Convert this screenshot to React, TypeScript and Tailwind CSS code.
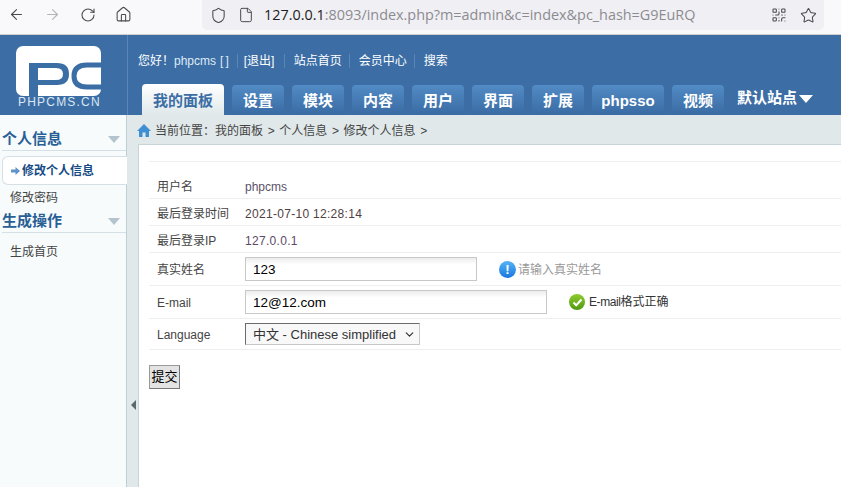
import { ArrowLeft, ArrowRight, ChevronDown, File, Home, QrCode, RotateCw, Shield, Star } from "lucide-react";

const FONT = "[font-family:'Liberation_Sans','Noto_Sans_CJK_SC',sans-serif]";

const tabs = [
  { name: "设置", w: "w-[52px]" },
  { name: "模块", w: "w-[52px]" },
  { name: "内容", w: "w-[52px]" },
  { name: "用户", w: "w-[52px]" },
  { name: "界面", w: "w-[52px]" },
  { name: "扩展", w: "w-[52px]" },
  { name: "phpsso", w: "w-[72px]" },
  { name: "视频", w: "w-[52px]" },
];

const topLinks = [
  { t: "[退出]", c: "ml-[6px] pl-[6px] w-[41px]" },
  { t: "站点首页", c: "ml-[6px] pl-[9px]" },
  { t: "会员中心", c: "ml-[7px] pl-[9px]" },
  { t: "搜索", c: "ml-[7px] pl-[9px]" },
];

const BrowserBar = () => (
  <div className="h-[35px] shrink-0 flex items-start bg-[#f9f9fb] border-b border-[#cfcfcf] text-[#4a4a4f]">
    <div className="flex items-center h-[29px] pl-[8px] gap-[19px]">
      <ArrowLeft size={17} strokeWidth={1.5} />
      <ArrowRight size={17} strokeWidth={1.5} className="text-[#b5b5b8]" />
      <RotateCw size={16} strokeWidth={1.6} />
      <Home size={17} strokeWidth={1.5} />
    </div>
    <div className="ml-[70px] w-[622px] h-[30px] flex items-center bg-[#f0f0f4] rounded-b-[5px] pl-[8px] pr-[7px]">
      <Shield size={17} strokeWidth={1.5} />
      <File size={16} strokeWidth={1.5} className="ml-[11px]" />
      <span className="ml-[10px] text-[14.4px] text-[#8c8b90] whitespace-nowrap [font-family:'Open_Sans',sans-serif]">
        <span className="text-[#1c1b22]">127.0.0.1</span>:8093/index.php?m=admin&amp;c=index&amp;pc_hash=G9EuRQ
      </span>
      <div className="ml-auto flex items-center gap-[13px]">
        <QrCode size={16} strokeWidth={1.6} />
        <Star size={17} strokeWidth={1.5} />
      </div>
    </div>
  </div>
);

const Logo = () => (
  <div className="w-[127px] shrink-0 pl-[16px] pt-[11px]">
    <svg width="86" height="52" viewBox="0 0 86 52" className="block">
      <rect x="0" y="0" width="85" height="50" rx="7" fill="#fff" />
      <path d="M13 52V17H41Q53 17 53 28Q53 39 41 39H22V34H40Q47 34 47 28Q47 22 40 22H22V52Z" fill="#3b6ea5" />
      <path d="M86 19H71Q58 19 58 30Q58 41 71 41H86" fill="none" stroke="#3b6ea5" strokeWidth="5" />
    </svg>
    <div className="text-[#dbe7f3] text-[12px] leading-[12px] mt-[-2px] pl-[2px] tracking-[1.2px] whitespace-nowrap [font-family:'Liberation_Sans',sans-serif]">PHPCMS.CN</div>
  </div>
);

const Header = () => (
  <div className="h-[80px] shrink-0 flex bg-[#3c6ea5]">
    <Logo />
    <div className="flex-1 border-l border-[#5a86b5] pl-[10px]">
      <div className="h-[49px] pt-[3px] flex items-center text-white text-[12px] whitespace-nowrap">
        <span>您好！<span className="text-[#dfeaf6]">phpcms<span className="ml-[4px] tracking-[2px]">[]</span></span></span>
        {topLinks.map((l) => (
          <span key={l.t} className={`${l.c} border-l border-[#5a86b5] leading-[14px]`}>{l.t}</span>
        ))}
      </div>
      <div className="flex items-end h-[31px] ml-[4px] gap-[8px] text-[15px] font-bold">
        <div className="w-[82px] h-[31px] pt-[4px] flex items-center justify-center rounded-t-[4px] text-[#3c6ea5] bg-gradient-to-b from-white to-[#e0e8ea]">我的面板</div>
        {tabs.map((t) => (
          <div key={t.name} className={`${t.w} h-[30px] pt-[3px] flex items-center justify-center rounded-t-[4px] text-white bg-gradient-to-b from-[#528bc5] to-[#3a6ba3]`}>{t.name}</div>
        ))}
        <div className="self-stretch ml-[5px] flex items-center pb-[2px] text-white whitespace-nowrap">
          默认站点
          <span className="ml-[2px] w-0 h-0 border-x-[7px] border-x-transparent border-t-[8px] border-t-white" />
        </div>
      </div>
    </div>
  </div>
);

const SideHeading = ({ title }: { title: string }) => (
  <div className="h-[25px] ml-[2px] pt-[2px] flex items-center justify-between border-b border-[#d5e0e6] pr-[6px] text-[15px] leading-[20px] font-bold text-[#2a5f96]">
    {title}
    <span className="w-0 h-0 border-x-[6px] border-x-transparent border-t-[7px] border-t-[#b4c3cc]" />
  </div>
);

const Sidebar = () => (
  <div className="w-[127px] shrink-0 relative bg-[#f7fbfc] border-r border-[#bfcdd4] pt-[11px]">
    <SideHeading title="个人信息" />
    <div className="h-[29px] mt-[5px] ml-[2px] mr-[-1px] flex items-center pl-[8px] bg-white border border-r-0 border-[#d5e0e6] rounded-l-[6px] text-[12px] font-bold text-[#164a84] whitespace-nowrap">
      <svg width="9" height="8" viewBox="0 0 9 8" className="shrink-0"><path d="M0 2.5H4.5V0L9 4L4.5 8V5.5H0Z" fill="#5f93c9" /></svg>
      <span className="ml-[2px]">修改个人信息</span>
    </div>
    <div className="h-[26px] pl-[10px] flex items-center text-[12px] text-[#444]">修改密码</div>
    <div className="mt-[-3px]">
      <SideHeading title="生成操作" />
    </div>
    <div className="h-[36px] pl-[10px] pt-[2px] flex items-center text-[12px] text-[#444]">生成首页</div>
  </div>
);

const rows = [
  { h: "h-[37px]", pt: "pt-[14px]", label: "用户名", value: <span className="text-[#5b5269]">phpcms</span> },
  { h: "h-[27px]", pt: "pt-[3px]", label: "最后登录时间", value: <span className="text-[#4f3f3f] tracking-[0.3px]">2021-07-10 12:28:14</span> },
  { h: "h-[27px]", pt: "pt-[3px]", label: "最后登录IP", value: <span className="text-[#5b4a66] tracking-[0.3px]">127.0.0.1</span> },
  {
    h: "h-[33px]",
    pt: "",
    label: "真实姓名",
    value: (
      <div className="flex items-center">
        <div className="w-[232px] h-[24px] flex items-center pl-[7px] pt-[2px] border border-[#c8c8c8] bg-gradient-to-b from-[#ececec] to-white to-30% text-[13.5px] text-black">123</div>
        <span className="ml-[22px] w-[17px] h-[17px] rounded-full bg-gradient-to-b from-[#55b4f5] to-[#1677dd] text-white text-[13px] leading-[17px] font-bold text-center">!</span>
        <span className="ml-[2px] text-[#999] pt-[2px]">请输入真实姓名</span>
      </div>
    ),
  },
  {
    h: "h-[33px]",
    pt: "",
    label: "E-mail",
    value: (
      <div className="flex items-center">
        <div className="w-[302px] h-[24px] flex items-center pl-[7px] pt-[2px] border border-[#c8c8c8] bg-gradient-to-b from-[#ececec] to-white to-30% text-[13.5px] text-black">12@12.com</div>
        <span className="ml-[22px] w-[16px] h-[16px] flex items-center justify-center rounded-full bg-gradient-to-b from-[#8fcb2e] to-[#4f9a10]">
          <svg width="11" height="9" viewBox="0 0 11 9"><path d="M1.5 4.5L4.2 7.2L9.5 1.5" fill="none" stroke="#fff" strokeWidth="2" /></svg>
        </span>
        <span className="ml-[4px] text-[#333]"><span className="tracking-[-0.4px]">E-mail</span>格式正确</span>
      </div>
    ),
  },
  {
    h: "h-[31px]",
    pt: "",
    label: "Language",
    value: (
      <div className="w-[175px] h-[22px] flex items-center justify-between pl-[7px] pr-[3px] border border-[#c8c8c8] border-t-[#6b6b6b] border-l-[#6b6b6b] bg-[#f8f8f8] text-[13px] text-[#333] whitespace-nowrap">
        <span className="pt-[2px]">中文 - Chinese simplified</span>
        <ChevronDown size={13} strokeWidth={2.2} />
      </div>
    ),
  },
];

const Content = () => (
  <div className="flex-1 min-w-0 flex flex-col bg-[#e0e8ea]">
    <div className="h-[29px] shrink-0 pl-[10px] pt-[2px] flex items-center text-[12px] text-[#444] whitespace-nowrap">
      <svg width="14" height="13" viewBox="0 0 14 13" className="shrink-0"><path d="M7 0L14 7H12V13H8.5V8.5H5.5V13H2V7H0Z" fill="#3f8fd2" /></svg>
      <span className="ml-[4px] [word-spacing:1.3px]">当前位置：我的面板 &gt; 个人信息 &gt; 修改个人信息 &gt;</span>
    </div>
    <div className="flex flex-1 min-h-0 relative">
      <div className="w-[11px] shrink-0 relative">
        <span className="absolute left-[4px] top-[256px] w-0 h-0 border-y-[5px] border-y-transparent border-r-[5px] border-r-[#5a6870]" />
      </div>
      <div className="flex-1 bg-white border-l border-t border-[#c8d4da] pl-[10px] pt-[16px]">
        <div className="border-t border-[#eeeeee] text-[12px]">
          {rows.map((r) => (
            <div key={r.label} className={`${r.h} flex items-center border-b border-[#eeeeee]`}>
              <div className={`${r.pt || "pt-[2px]"} w-[96px] pl-[8px] shrink-0 text-[#444]`}>{r.label}</div>
              <div className={r.pt}>{r.value}</div>
            </div>
          ))}
        </div>
        <button className="mt-[15px] w-[31px] h-[24px] flex items-center justify-center text-[13px] text-black bg-[#e3e3e3] border border-[#999] border-r-[#777] border-b-[#777]">提交</button>
      </div>
    </div>
  </div>
);

export default function App() {
  return (
    <div className={`h-[487px] w-[841px] overflow-hidden flex flex-col ${FONT}`}>
      <BrowserBar />
      <Header />
      <div className="flex flex-1 min-h-0">
        <Sidebar />
        <Content />
      </div>
    </div>
  );
}
